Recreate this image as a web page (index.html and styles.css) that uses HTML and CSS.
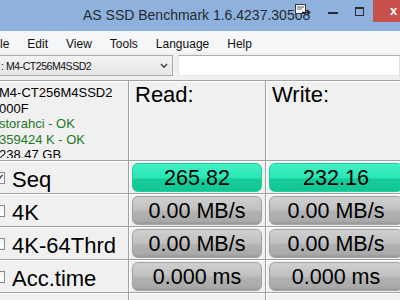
FILE: index.html
```
<!doctype html>
<html>
<head>
  <link rel="stylesheet" href="styles.css">
</head>
<body>
<div class="window">
  <div class="titlebar">
    <div class="title">AS SSD Benchmark 1.6.4237.30508</div>
    <svg class="tray-icon" width="18" height="13" viewBox="0 0 18 13">
      <rect x="1.5" y="1.5" width="10" height="9" fill="#f4f7fc" stroke="#3a3a3a"/>
      <line x1="3" y1="4" x2="10" y2="4" stroke="#555"/>
      <line x1="3" y1="6" x2="8" y2="6" stroke="#777"/>
      <path d="M8 9.5 H15.5 M13 7 L15.8 9.5 L13 12" fill="none" stroke="#2a2a2a" stroke-width="1.3"/>
    </svg>
    <div class="caption">
      <div class="cap-btn"><span class="min-glyph"></span></div>
      <div class="cap-btn"><span class="max-glyph"></span></div>
      <div class="cap-btn close">x</div>
    </div>
  </div>

  <div class="menubar">
    <span class="menu-item">File</span>
    <span class="menu-item">Edit</span>
    <span class="menu-item">View</span>
    <span class="menu-item">Tools</span>
    <span class="menu-item">Language</span>
    <span class="menu-item">Help</span>
  </div>

  <div class="toolbar">
    <div class="combo">
      <span class="combo-text">: M4-CT256M4SSD2</span>
      <svg class="chevron" width="8" height="6" viewBox="0 0 8 6"><path d="M1 1 L4 4.2 L7 1" fill="none" stroke="#3c3c3c" stroke-width="1.4"/></svg>
    </div>
    <div class="textbox"></div>
  </div>

  <div class="grid">
    <div class="cell info-cell">
      <div class="info">
        <div>M4-CT256M4SSD2</div>
        <div>000F</div>
        <div class="ok">storahci - OK</div>
        <div class="ok">359424 K - OK</div>
        <div>238.47 GB</div>
      </div>
    </div>
    <div class="cell head">Read:</div>
    <div class="cell head">Write:</div>

    <div class="cell row-label"><span class="check on"><svg width="9" height="9" viewBox="0 0 9 9"><path d="M1.5 4.5 L3.5 6.8 L7.5 1.8" fill="none" stroke="#333" stroke-width="1.3"/></svg></span><span class="label">Seq</span></div>
    <div class="cell value"><div class="meter good">265.82</div></div>
    <div class="cell value"><div class="meter good">232.16</div></div>

    <div class="cell row-label"><span class="check"></span><span class="label">4K</span></div>
    <div class="cell value"><div class="meter">0.00 MB/s</div></div>
    <div class="cell value"><div class="meter">0.00 MB/s</div></div>

    <div class="cell row-label"><span class="check"></span><span class="label">4K-64Thrd</span></div>
    <div class="cell value"><div class="meter">0.00 MB/s</div></div>
    <div class="cell value"><div class="meter">0.00 MB/s</div></div>

    <div class="cell row-label"><span class="check"></span><span class="label">Acc.time</span></div>
    <div class="cell value"><div class="meter">0.000 ms</div></div>
    <div class="cell value"><div class="meter">0.000 ms</div></div>

    <div class="cell"></div>
    <div class="cell"></div>
    <div class="cell"></div>
  </div>
</div>
</body>
</html>
```
FILE: styles.css
```
body {
  margin: 0;
  width: 400px;
  height: 300px;
  overflow: hidden;
  background: #f0f0f0;
  font-family: "Liberation Sans", Arial, sans-serif;
}

.window {
  width: 400px;
  overflow: hidden;
}

/* title bar */
.titlebar {
  position: relative;
  height: 31px;
  background: #8fb1de;
  display: flex;
  align-items: flex-start;
}
.title {
  padding-left: 83px;
  padding-top: 6px;
  font-size: 14px;
  line-height: 18px;
  color: #262a30;
  white-space: nowrap;
}
.tray-icon {
  position: absolute;
  left: 294px;
  top: 3px;
}
.caption {
  margin-left: auto;
  display: flex;
  margin-right: -14px;
}
.cap-btn {
  width: 26px;
  height: 22px;
  display: flex;
  justify-content: center;
}
.min-glyph {
  margin-top: 12px;
  width: 10px;
  height: 2px;
  background: #2b2b2b;
}
.max-glyph {
  margin-top: 7px;
  width: 7px;
  height: 6px;
  border: 1px solid #2b2b2b;
  border-top-width: 2px;
}
.cap-btn.close {
  width: 41px;
  margin-left: 1px;
  background: #c7504c;
  color: #fff;
  font-weight: bold;
  font-size: 13px;
  line-height: 21px;
}

/* menu */
.menubar {
  height: 19px;
  padding-top: 3px;
  background: #f5f6f7;
  display: flex;
  margin-left: -19px;
  font-size: 12px;
  line-height: 20px;
  color: #111;
}
.menu-item {
  padding: 0 9px;
}

/* toolbar */
.toolbar {
  height: 25px;
  padding-top: 2px;
  display: flex;
  align-items: flex-start;
}
.combo {
  margin-left: -1px;
  width: 199px;
  height: 19px;
  border: 1px solid #acacac;
  background: linear-gradient(#f3f3f3, #e6e6e6);
  display: flex;
  align-items: center;
}
.combo-text {
  flex: 1;
  padding-left: 1px;
  font-size: 10.5px;
  letter-spacing: -0.45px;
  color: #111;
}
.chevron {
  margin-right: 4px;
}
.textbox {
  margin-left: 5px;
  width: 220px;
  flex: none;
  height: 19px;
  border: 1px solid #abadb3;
  border-color: #abadb3 #dbdfe6 #e3e9ef #e2e3ea;
  background: #fff;
}

/* results grid */
.grid {
  margin-left: -10px;
  padding-top: 1px;
  background: #a0a0a0;
  display: grid;
  grid-template-columns: 138px 136px 140px;
  grid-template-rows: 79px 32px 32px 32px 32px 32px;
  gap: 1px;
}
.cell {
  background: #f0f0f0;
  border-top: 1px solid #fff;
  border-left: 1px solid #fff;
  overflow: hidden;
}

.info-cell {
  padding: 3px 0 0 8px;
}
.info {
  height: 73px;
  overflow: hidden;
  font-size: 13px;
  line-height: 15.5px;
  color: #000;
  white-space: nowrap;
}
.info .ok {
  color: #1e7a1e;
}

.head {
  padding: 1px 0 0 5px;
  font-size: 22px;
  line-height: 24px;
  color: #000;
}

.row-label {
  display: flex;
  align-items: center;
}
.check {
  margin-left: 2px;
  width: 10px;
  height: 10px;
  border: 1px solid #8a8a8a;
  background: linear-gradient(#f4f4f4, #ffffff);
  display: flex;
  align-items: center;
  justify-content: center;
}
.label {
  margin-left: 7px;
  padding-top: 3px;
  font-size: 22px;
  line-height: 25px;
  color: #000;
  white-space: nowrap;
}

.value {
  padding: 1px 3px 1px 2px;
}
.meter {
  height: 27px;
  border: 1px solid #a3a3a3;
  border-radius: 6px;
  background: linear-gradient(#d0d0d0 0%, #c0c0c0 48%, #b2b2b2 54%, #aaaaaa 88%, #979797 100%);
  text-align: center;
  font-size: 21.5px;
  line-height: 28px;
  color: #000;
  white-space: nowrap;
}
.meter.good {
  border-color: #1fd09f;
  background: linear-gradient(#41f0c5 0%, #2ae7b6 50%, #15cc99 56%, #12c694 100%);
}
```
